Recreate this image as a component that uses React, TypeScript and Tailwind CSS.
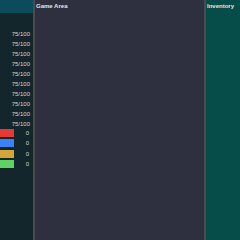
const STATS = Array.from({ length: 10 }, () => '75/100');
const RESOURCES = ['#e53935', '#3b82f6', '#d4a537', '#5fd35f'];

export default function App() {
  return (
    <div className="flex h-[240px] w-[240px] overflow-hidden font-['Liberation_Sans',sans-serif]">
      <aside className="flex w-[33px] shrink-0 flex-col bg-[#13262c]">
        <div className="h-[13px] bg-[#0b4b5c]" />
        <div className="flex flex-col pt-[16px]">
          {STATS.map((s, i) => (
            <div key={i} className="flex h-[10px] items-center justify-end pr-[3px] text-[6px] leading-none text-[#d4d4d4]">
              {s}
            </div>
          ))}
          {RESOURCES.map((c) => (
            <div key={c} className="flex h-[10.3px] items-start justify-between pr-[4px]">
              <div className="h-[8px] w-[14px]" style={{ backgroundColor: c }} />
              <span className="text-[6px] leading-[8px] text-[#d4d4d4]">0</span>
            </div>
          ))}
        </div>
      </aside>
      <main className="w-[173px] shrink-0 border-x-2 border-[#4a4a4f] bg-[#2e2f3f] px-[1px] pt-[2px]">
        <div className="text-[6px] font-bold leading-[8px] text-[#e6e6e6]">Game Area</div>
      </main>
      <aside className="flex-1 bg-[#064d4a] px-[1px] pt-[2px]">
        <div className="text-[6px] font-bold leading-[8px] text-[#e6e6e6]">Inventory</div>
      </aside>
    </div>
  );
}
